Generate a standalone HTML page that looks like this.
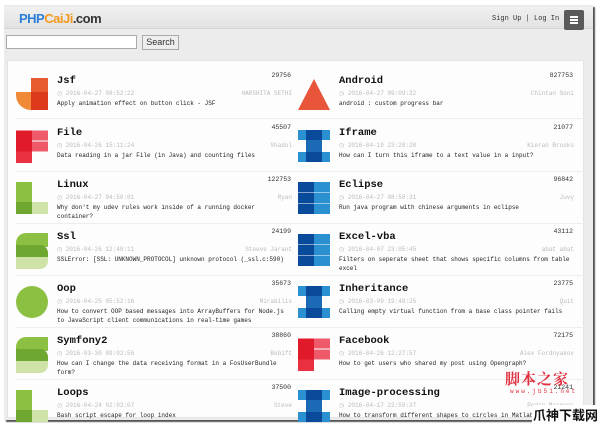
<!DOCTYPE html>
<html><head><meta charset="utf-8"><style>
*{margin:0;padding:0;box-sizing:border-box}
body{width:600px;height:425px;background:#fff;position:relative;overflow:hidden;font-family:"Liberation Mono",monospace}
.win{position:absolute;left:4px;top:5px;width:589px;height:415px;background:#ececec;box-shadow:2px 2px 1px #555}
.hdr{position:absolute;left:0;top:2px;width:589px;height:22px;background:linear-gradient(#f0f0f0,#e2e2e2);border-bottom:1px solid #d6d6d6}
.logo{position:absolute;left:15px;top:4px;font:bold 13px "Liberation Sans",sans-serif;letter-spacing:-0.5px}
.logo .a{color:#2b7fd8}.logo .b{color:#f39a1e}.logo .c{color:#333}
.nav{position:absolute;left:488px;top:8px;font-size:7px;color:#333}
.menu{position:absolute;left:560px;top:3px;width:20px;height:20px;background:#5a5a5a;border-radius:2px}
.menu i{position:absolute;left:6px;width:8px;height:1.5px;background:#fff}
.srch{position:absolute;left:2px;top:30px;width:131px;height:14px;background:#fff;border:1px solid #aaa}
.btn{position:absolute;left:138px;top:30px;width:37px;height:15px;background:#eee;border:1px solid #aaa;font:9px "Liberation Sans",sans-serif;color:#333;text-align:center;line-height:13px}
.panel{position:absolute;left:3px;top:55px;width:577px;height:358px;background:#fdfdfd;border:1px solid #e4e4e4}
.it{position:absolute;width:280px;height:52px}
.it svg{position:absolute;left:5px;top:11px}
.t{position:absolute;left:46px;top:8px;font-size:10.5px;font-weight:bold;color:#111}
.n{position:absolute;right:0;top:5px;font-size:6.5px;color:#333}
.m{position:absolute;left:46px;top:23px;font-size:6px;color:#bbb;width:235px}
.m span{position:absolute;right:0}
.d{position:absolute;left:46px;top:32px;font-size:6px;color:#222;width:236px;line-height:9px}
.sep{position:absolute;left:8px;width:568px;height:1px;background:#eee}
</style></head><body>
<svg width="0" height="0" style="position:absolute">
<defs>
<symbol id="jsf" viewBox="0 0 32 32"><rect x="15" y="0" width="17" height="32" fill="#e85a30"/><path d="M0 14H32V32H15A15 15 0 0 1 0 17Z" fill="#f08a36"/><rect x="15" y="14" width="17" height="18" fill="#dc3a1a"/></symbol>
<symbol id="and" viewBox="0 0 32 32"><path d="M16 1L32 32H0Z" fill="#e8553a"/></symbol>
<symbol id="file" viewBox="0 0 32 32"><rect x="0" y="0" width="16" height="33" fill="#e01a2a"/><rect x="16" y="0" width="16" height="10" fill="#ee5a6a"/><rect x="16" y="11" width="16" height="10" fill="#ee5a6a"/><rect x="0" y="21" width="16" height="12" fill="#e83040"/></symbol>
<symbol id="ifr" viewBox="0 0 32 32"><rect x="0" y="0" width="32" height="10" fill="#2a90d0"/><rect x="8" y="0" width="16" height="10" fill="#0a4a9a"/><rect x="8" y="10" width="16" height="12" fill="#1a6ab8"/><rect x="0" y="22" width="32" height="10" fill="#2a90d0"/><rect x="8" y="22" width="16" height="10" fill="#0a4a9a"/></symbol>
<symbol id="lin" viewBox="0 0 32 32"><rect x="0" y="0" width="16" height="32" fill="#8cc043"/><rect x="0" y="20" width="16" height="12" fill="#6ea830"/><rect x="16" y="20" width="16" height="12" fill="#cfe3a8"/></symbol>
<symbol id="ecl" viewBox="0 0 32 32"><rect x="0" y="0" width="16" height="32" fill="#0a4a9a"/><rect x="16" y="0" width="16" height="32" fill="#2a90d0"/><rect x="0" y="10" width="32" height="1" fill="#fff" opacity=".5"/><rect x="0" y="21" width="32" height="1" fill="#fff" opacity=".5"/></symbol>
<symbol id="ssl" viewBox="0 0 32 36"><path d="M10 0H32V14H0V10A10 10 0 0 1 10 0Z" fill="#8cc043"/><path d="M0 12H24A8 8 0 0 1 32 20V24H0Z" fill="#6ea830"/><path d="M0 24H32V28A8 8 0 0 1 24 36H0Z" fill="#cfe3a8"/></symbol>
<symbol id="oop" viewBox="0 0 32 32"><circle cx="16" cy="16" r="16" fill="#8cc043"/></symbol>
</defs></svg>
<div class="win">
<div class="hdr"><div class="logo"><span class="a">PHP</span><span class="b">CaiJi</span><span class="c">.com</span></div>
<div class="nav">Sign Up | Log In</div>
<div class="menu"><i style="top:6px"></i><i style="top:9px"></i><i style="top:12px"></i></div></div>
<div class="srch"></div><div class="btn">Search</div>
<div class="panel">
<div class="it" style="left:3px;top:6px"><svg width="32" height="32"><use href="#jsf"/></svg><div class="t">Jsf</div><div class="n">29756</div><div class="m">◷ 2016-04-27 08:52:22<span>HARSHITA SETHI</span></div><div class="d">Apply animation effect on button click - JSF</div></div>
<div class="it" style="left:285px;top:6px"><svg width="32" height="32"><use href="#and"/></svg><div class="t">Android</div><div class="n">827753</div><div class="m">◷ 2016-04-27 09:09:32<span>Chintan Soni</span></div><div class="d">android : custom progress bar</div></div>
<div class="sep" style="top:57px"></div>
<div class="it" style="left:3px;top:58px"><svg width="32" height="33"><use href="#file"/></svg><div class="t">File</div><div class="n">45507</div><div class="m">◷ 2016-04-26 15:11:24<span>Shadol</span></div><div class="d">Data reading in a jar File (in Java) and counting files</div></div>
<div class="it" style="left:285px;top:58px"><svg width="32" height="32"><use href="#ifr"/></svg><div class="t">Iframe</div><div class="n">21077</div><div class="m">◷ 2016-04-19 23:28:28<span>Kieran Brooks</span></div><div class="d">How can I turn this iframe to a text value in a input?</div></div>
<div class="sep" style="top:110px"></div>
<div class="it" style="left:3px;top:110px"><svg width="32" height="32"><use href="#lin"/></svg><div class="t">Linux</div><div class="n">122753</div><div class="m">◷ 2016-04-27 04:50:01<span>Ryan</span></div><div class="d">Why don't my udev rules work inside of a running docker<br>container?</div></div>
<div class="it" style="left:285px;top:110px"><svg width="32" height="32"><use href="#ecl"/></svg><div class="t">Eclipse</div><div class="n">96842</div><div class="m">◷ 2016-04-27 08:58:31<span>Juvy</span></div><div class="d">Run java program with chinese arguments in eclipse</div></div>
<div class="sep" style="top:162px"></div>
<div class="it" style="left:3px;top:162px"><svg width="32" height="36" style="top:10px"><use href="#ssl"/></svg><div class="t">Ssl</div><div class="n">24199</div><div class="m">◷ 2016-04-26 12:48:11<span>Steeve Jarant</span></div><div class="d">SSLError: [SSL: UNKNOWN_PROTOCOL] unknown protocol (_ssl.c:590)</div></div>
<div class="it" style="left:285px;top:162px"><svg width="32" height="32"><use href="#ecl"/></svg><div class="t">Excel-vba</div><div class="n">43112</div><div class="m">◷ 2016-04-07 23:05:45<span>abat abat</span></div><div class="d">Filters on seperate sheet that shows specific columns from table<br>excel</div></div>
<div class="sep" style="top:214px"></div>
<div class="it" style="left:3px;top:214px"><svg width="32" height="32"><use href="#oop"/></svg><div class="t">Oop</div><div class="n">35673</div><div class="m">◷ 2016-04-25 05:52:16<span>Mirabilis</span></div><div class="d">How to convert OOP based messages into ArrayBuffers for Node.js<br>to JavaScript client communications in real-time games</div></div>
<div class="it" style="left:285px;top:214px"><svg width="32" height="32"><use href="#ifr"/></svg><div class="t">Inheritance</div><div class="n">23775</div><div class="m">◷ 2016-03-09 19:48:25<span>Quit</span></div><div class="d">Calling empty virtual function from a base class pointer fails</div></div>
<div class="sep" style="top:266px"></div>
<div class="it" style="left:3px;top:266px"><svg width="32" height="36" style="top:10px"><use href="#ssl"/></svg><div class="t">Symfony2</div><div class="n">38860</div><div class="m">◷ 2016-03-30 09:02:56<span>Bebift</span></div><div class="d">How can I change the data receiving format in a FosUserBundle<br>form?</div></div>
<div class="it" style="left:285px;top:266px"><svg width="32" height="33"><use href="#file"/></svg><div class="t">Facebook</div><div class="n">72175</div><div class="m">◷ 2016-04-26 12:27:57<span>Alex Fordnyakov</span></div><div class="d">How to get users who shared my post using Opengraph?</div></div>
<div class="sep" style="top:318px"></div>
<div class="it" style="left:3px;top:318px"><svg width="32" height="32"><use href="#lin"/></svg><div class="t">Loops</div><div class="n">37500</div><div class="m">◷ 2016-04-24 02:03:07<span>Steve</span></div><div class="d">Bash script escape for loop index</div></div>
<div class="it" style="left:285px;top:318px"><svg width="32" height="32"><use href="#ifr"/></svg><div class="t">Image-processing</div><div class="n">21241</div><div class="m">◷ 2016-04-17 22:59:37<span>Pedro Marques</span></div><div class="d">How to transform different shapes to circles in Matlab</div></div>
</div>
</div>
<div style="position:absolute;left:505px;top:370px;font:bold 15px 'Noto Serif CJK SC',serif;color:#e03040;letter-spacing:1px;white-space:nowrap;line-height:18px">脚本之家</div>
<div style="position:absolute;left:510px;top:388px;font-size:6px;color:#e03040;letter-spacing:2px;white-space:nowrap">www.jb51.net</div>
<div style="position:absolute;left:532px;top:405px;font:bold 13px 'Noto Sans CJK SC',sans-serif;color:#111;background:#fff;line-height:19px;padding:0 1px;white-space:nowrap">爪神下载网</div>
</body></html>
